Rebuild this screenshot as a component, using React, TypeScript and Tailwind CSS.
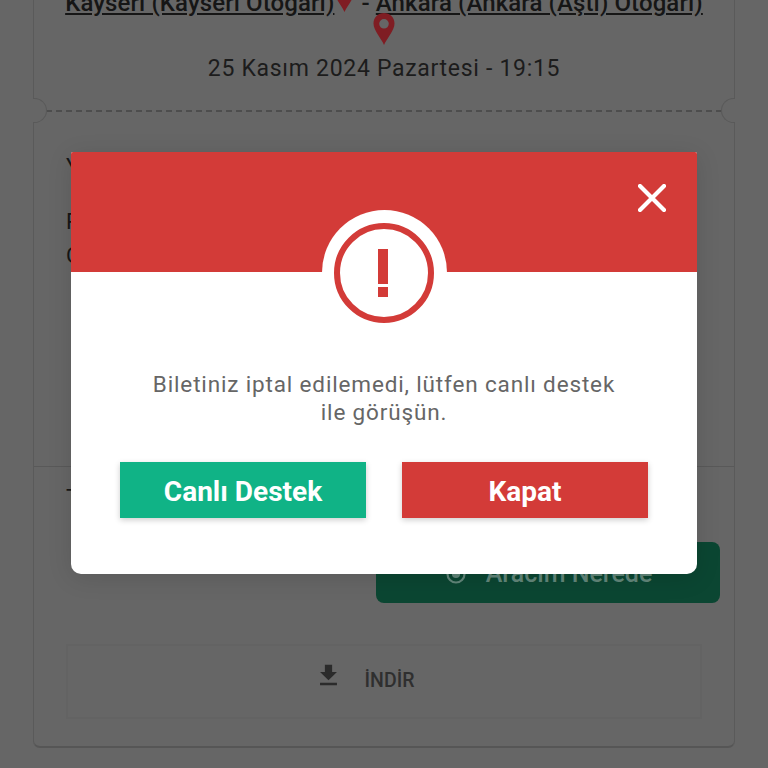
const FONT = "font-['Roboto','Liberation_Sans',sans-serif]"

function Marker({ className }: { className: string }) {
  return (
    <svg viewBox="0 0 24 32" className={className}>
      <path
        fillRule="evenodd"
        d="M12 0C6 0 1.5 4.6 1.5 10.5 1.5 17.500 9 25 12 32c3-7 10.500-14.500 10.500-21.500C22.500 4.600 18 0 12 0Zm0 6a4.800 4.800 0 1 1 0 9.600A4.800 4.800 0 0 1 12 6Z"
        fill="#7f1d23"
      />
    </svg>
  )
}

/** Yarım koło na krawędzi biletu, przy linii perforacji. */
function Notch({ side }: { side: 'left' | 'right' }) {
  return (
    <div
      className={
        side === 'left'
          ? 'absolute -left-[1px] top-[118px] h-[25px] w-[14px] rounded-r-full border border-l-0 border-[#595959] bg-[#666666]'
          : 'absolute -right-[1px] top-[118px] h-[25px] w-[14px] rounded-l-full border border-r-0 border-[#595959] bg-[#666666]'
      }
    />
  )
}

function TicketBehind() {
  return (
    <div className="relative -mt-[20px] ml-[33px] flex h-[768px] w-[702px] flex-col rounded-b-[7px] border-x border-b-2 border-x-[#5a5a5a] border-b-[#565656]">
      <div className="flex h-[130px] flex-col items-center pt-[9px] text-[#161616]">
        <div className="flex h-[28px] items-center whitespace-nowrap text-[24px] leading-7 font-medium tracking-[0.1px]">
          <span className="underline">Kayseri (Kayseri Otogarı)</span>
          <Marker className="-mt-[10px] h-[28px] w-[21px]" />
          <span>&nbsp;-&nbsp;</span>
          <span className="underline">Ankara (Ankara (Aştı) Otogarı)</span>
        </div>
        <Marker className="-mt-[4px] h-[32px] w-[24px]" />
        <div className="mt-[10px] text-[23px] leading-7 tracking-[0.7px] text-[#1c1c1c]">
          25 Kasım 2024 Pazartesi - 19:15
        </div>
      </div>

      <div className="mx-[12px] border-t-2 border-dashed border-[#4d4d4d]" />
      <Notch side="left" />
      <Notch side="right" />

      <div className="flex h-[354px] flex-col px-[32px] pt-[41px] text-[22px] text-[#161616]">
        <div className="h-[55px] leading-7">Yolcu</div>
        <div className="h-[34px] leading-7">PNR</div>
        <div className="leading-7">Otobüs</div>
      </div>

      <div className="flex flex-col border-t border-[#595959] px-[32px] pt-[14px]">
        <div className="h-[61px] pt-[3px] text-[22px] leading-7 text-[#161616]">Tutar</div>
        <div className="-mr-[18px] ml-[310px] flex h-[61px] items-center justify-center gap-[18px] rounded-[8px] bg-[#0b4632] pt-[2px] text-[25px] font-medium text-[#62867a]">
          <svg viewBox="0 0 24 24" className="h-[24px] w-[24px]" fill="none" stroke="#62867a" strokeWidth="2.2">
            <circle cx="12" cy="12" r="8.500" />
            <circle cx="12" cy="12" r="3" fill="#62867a" />
          </svg>
          Aracım Nerede
        </div>
        <div className="mt-[41px] flex h-[75px] items-center justify-center gap-[22px] border-2 border-[#636363] pr-[40px] pb-[2px]">
          <svg viewBox="0 0 24 24" className="-mt-[10px] h-[29px] w-[29px]" fill="#2b2b2b">
            <path d="M19 9h-4V3H9v6H5l7 7 7-7zM5 18v2h14v-2H5z" />
          </svg>
          <span className="text-[19.500px] font-medium text-[#2f2f2f]">İNDİR</span>
        </div>
      </div>
    </div>
  )
}

function ErrorDialog() {
  return (
    <div className="absolute inset-0 flex items-start justify-center pt-[152px]">
      <div className="flex h-[422px] w-[626px] flex-col overflow-hidden rounded-t-[2px] rounded-b-[10px] bg-white shadow-[0_4px_24px_rgba(0,0,0,0.12)]">
        <div className="relative h-[120px] shrink-0 bg-[#d33b38]">
          <svg viewBox="0 0 28 28" className="absolute top-[32px] right-[31px] h-[28px] w-[28px]" fill="none" stroke="white" strokeWidth="4.200" strokeLinecap="round">
            <path d="M2 2l24 24M26 2L2 26" />
          </svg>
          <div className="absolute top-[58px] left-[251px] flex h-[125px] w-[125px] items-center justify-center rounded-full bg-white">
            <div className="mr-[1px] flex h-[100px] w-[100px] flex-col items-center justify-center rounded-full border-[6px] border-[#d33b38]">
              <div className="mr-[2px] h-[35px] w-[10px] bg-[#d33b38]" />
              <div className="mt-[3px] mr-[2px] h-[10px] w-[10px] bg-[#d33b38]" />
            </div>
          </div>
        </div>
        <div className="flex flex-1 flex-col items-center pt-[98px]">
          <p className="w-[480px] text-center text-[22.500px] leading-7 tracking-[0.85px] text-[#666666]">
            Biletiniz iptal edilemedi, lütfen canlı destek ile görüşün.
          </p>
          <div className="mt-[36px] flex gap-[36px]">
            <button className="h-[56px] w-[246px] bg-[#10b386] pt-[4px] text-[28px] font-bold text-white shadow-[0_2px_6px_rgba(0,0,0,0.2)]">
              Canlı Destek
            </button>
            <button className="h-[56px] w-[246px] bg-[#d33b38] pt-[4px] text-[28px] font-bold text-white shadow-[0_2px_6px_rgba(0,0,0,0.2)]">
              Kapat
            </button>
          </div>
        </div>
      </div>
    </div>
  )
}

export default function App() {
  return (
    <div className={`relative h-[768px] w-[768px] overflow-hidden bg-[#666666] ${FONT}`}>
      <TicketBehind />
      <ErrorDialog />
    </div>
  )
}
